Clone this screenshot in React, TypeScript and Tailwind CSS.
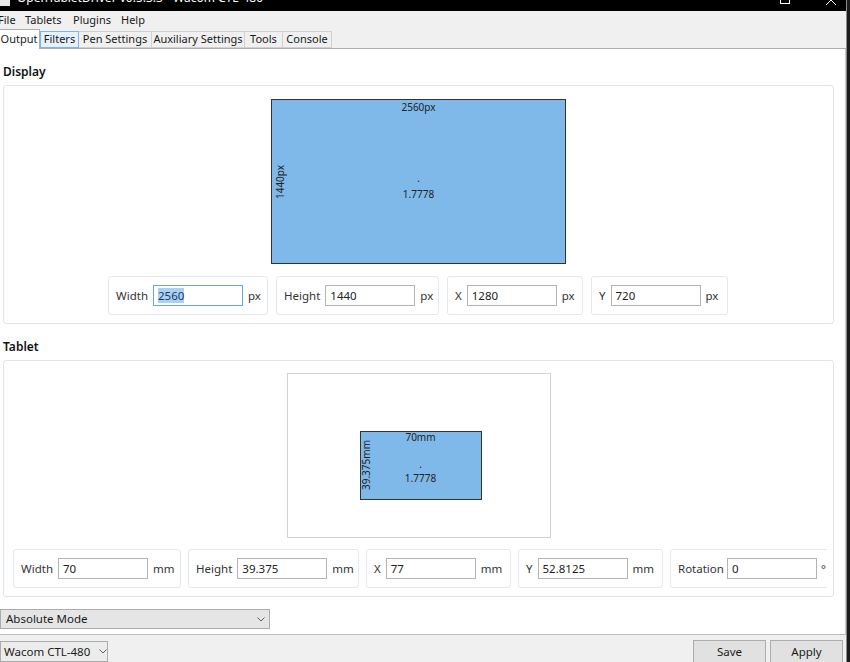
import React from "react";

const Chevron = () => (
  <svg width="8" height="5" viewBox="0 0 8 5" className="shrink-0">
    <polyline points="0.5,0.5 4,4 7.5,0.5" fill="none" stroke="#606060" strokeWidth="1" />
  </svg>
);

type FieldProps = {
  label: string;
  value: string;
  unit: string;
  width: string;
  focused?: boolean;
  tight?: boolean;
};

const Field = ({ label, value, unit, width, focused, tight }: FieldProps) => (
  <div
    className={`${width} h-[39px] shrink-0 flex items-center pl-[7px] border border-[#e3e8ee] rounded-[3px] bg-white whitespace-nowrap`}
  >
    <span className="text-[#333]">{label}</span>
    <div
      className={`${tight ? "ml-[3px]" : "ml-[5px]"} w-[90px] h-[21px] shrink-0 flex items-center px-[4px] border ${
        focused ? "border-[#6aa4df]" : "border-[#b4b4b4]"
      } bg-white`}
    >
      {focused ? (
        <span className="bg-[#a9d1f4] text-[#1b3a5a] leading-[15px]">{value}</span>
      ) : (
        <span className="text-[#222]">{value}</span>
      )}
    </div>
    <span className={`${tight ? "ml-[4px]" : "ml-[5px]"} text-[#333]`}>{unit}</span>
  </div>
);

export default function App() {
  return (
    <div className="w-[850px] h-[662px] bg-[#1c1c1c] flex overflow-hidden font-['Noto_Sans',sans-serif] text-[11.5px] text-[#1a1a1a] whitespace-nowrap">
      <div className="w-[847px] h-full flex flex-col bg-[#f0f0f0] border-r border-[#8c8c8c]">
        {/* Title bar */}
        <div className="h-[11px] bg-black relative overflow-hidden shrink-0">
          <div className="absolute left-[0px] top-[-6px] w-[10px] h-[12px] bg-[#e8e8e8]" />
          <div className="absolute left-[17px] top-[-10px] text-[12px] leading-[16px] text-white">
            OpenTabletDriver v0.5.3.3 - Wacom CTL-480
          </div>
          <div className="absolute left-[780px] top-[-6px] w-[10px] h-[10px] border border-white" />
          <svg className="absolute left-[826px] top-[-5px]" width="10" height="10" viewBox="0 0 10 10">
            <path d="M0,0 L10,10 M10,0 L0,10" stroke="white" strokeWidth="1" />
          </svg>
        </div>

        {/* Menu bar */}
        <div className="h-[19px] shrink-0 flex items-center -ml-[2px] text-[11px] text-[#1a1a1a]">
          <span className="w-[27px]">File</span>
          <span className="w-[48px]">Tablets</span>
          <span className="w-[48px]">Plugins</span>
          <span>Help</span>
        </div>

        {/* Tabs */}
        <div className="h-[19px] shrink-0 flex items-end -ml-[3px] border-b border-[#adadad] text-[11px]">
          <div className="w-[43px] h-[20px] -mb-[1px] bg-white border border-b-0 border-[#adadad] flex items-center justify-center pl-[1px] relative z-10">
            Output
          </div>
          <div className="w-[39px] h-[17px] bg-[#e5f1fb] border border-[#7eb4ea] flex items-center justify-center">
            Filters
          </div>
          <div className="w-[73px] h-[17px] bg-[#f0f0f0] border border-l-0 border-[#d0d0d0] flex items-center justify-center">
            Pen Settings
          </div>
          <div className="w-[93px] h-[17px] bg-[#f0f0f0] border border-l-0 border-[#d0d0d0] flex items-center justify-center">
            Auxiliary Settings
          </div>
          <div className="w-[38px] h-[17px] bg-[#f0f0f0] border border-l-0 border-[#d0d0d0] flex items-center justify-center">
            Tools
          </div>
          <div className="w-[49px] h-[17px] bg-[#f0f0f0] border border-l-0 border-[#d0d0d0] flex items-center justify-center">
            Console
          </div>
        </div>

        {/* Content */}
        <div className="flex-1 bg-white border-r border-[#c8c8c8] flex flex-col">
          <div className="mt-[15px] mb-[6px] ml-[3px] leading-[15px] font-semibold text-[12px] text-[#111]">
            Display
          </div>
          <div className="ml-[3px] w-[831px] h-[239px] border border-[#dde4ea] rounded-[3px] flex flex-col items-center pt-[13px]">
            <div className="w-[295px] h-[165px] shrink-0 bg-[#7fb9e9] border border-[#333] relative text-[10px] text-[#222] leading-[12px]">
              <div className="absolute top-[1px] left-0 right-0 text-center">2560px</div>
              <div className="absolute left-[-22px] top-[76px] w-[60px] text-center -rotate-90">1440px</div>
              <div className="absolute left-0 right-0 top-[72px] text-center">.</div>
              <div className="absolute left-0 right-0 top-[88px] text-center">1.7778</div>
            </div>
            <div className="mt-[12px] flex gap-[8px] -ml-[1px]">
              <Field label="Width" value="2560" unit="px" width="w-[160px]" focused />
              <Field label="Height" value="1440" unit="px" width="w-[163px]" />
              <Field label="X" value="1280" unit="px" width="w-[136px]" />
              <Field label="Y" value="720" unit="px" width="w-[137px]" />
            </div>
          </div>

          <div className="mt-[15px] mb-[6px] ml-[3px] leading-[15px] font-semibold text-[12px] text-[#111]">
            Tablet
          </div>
          <div className="ml-[3px] w-[831px] h-[237px] border border-[#dde4ea] rounded-[3px] flex flex-col items-center pt-[12px]">
            <div className="w-[264px] h-[165px] shrink-0 bg-white border border-[#d2d2d2] relative text-[10px] text-[#222] leading-[12px]">
              <div className="absolute left-[72px] top-[57px] w-[122px] h-[69px] bg-[#7fb9e9] border border-[#333]">
                <div className="absolute top-[-1px] left-0 right-0 text-center">70mm</div>
                <div className="absolute left-[-23px] top-[27px] w-[56px] text-center -rotate-90">39.375mm</div>
                <div className="absolute left-0 right-0 top-[26px] text-center">.</div>
                <div className="absolute left-0 right-0 top-[40px] text-center">1.7778</div>
              </div>
            </div>
            <div className="mt-[11px] self-start ml-[9px] w-[814px] overflow-hidden flex gap-[7px]">
              <Field label="Width" value="70" unit="mm" width="w-[168px]" />
              <Field label="Height" value="39.375" unit="mm" width="w-[171px]" />
              <Field label="X" value="77" unit="mm" width="w-[145px]" />
              <Field label="Y" value="52.8125" unit="mm" width="w-[145px]" />
              <Field label="Rotation" value="0" unit="°" width="w-[170px]" tight />
            </div>
          </div>

          <div className="mt-[12px] w-[270px] h-[20px] bg-[#e5e5e5] border border-[#acacac] flex items-center justify-between pl-[5px] pr-[4px] text-[11.5px]">
            <span>Absolute Mode</span>
            <Chevron />
          </div>
        </div>

        {/* Bottom bar */}
        <div className="h-[28px] shrink-0 border-t border-[#bdbdbd] bg-[#f0f0f0] flex items-start pt-[6px] text-[11.5px]">
          <div className="w-[108px] h-[21px] bg-[#ececec] border border-[#acacac] flex items-center pl-[3px] gap-[9px]">
            <span>Wacom CTL-480</span>
            <Chevron />
          </div>
          <div className="ml-auto flex gap-[4px] mr-[3px] -mt-[1px]">
            <div className="w-[73px] h-[23px] bg-[#e1e1e1] border border-[#adadad] flex items-center justify-center">
              Save
            </div>
            <div className="w-[73px] h-[23px] bg-[#e1e1e1] border border-[#adadad] flex items-center justify-center">
              Apply
            </div>
          </div>
        </div>
      </div>
    </div>
  );
}
